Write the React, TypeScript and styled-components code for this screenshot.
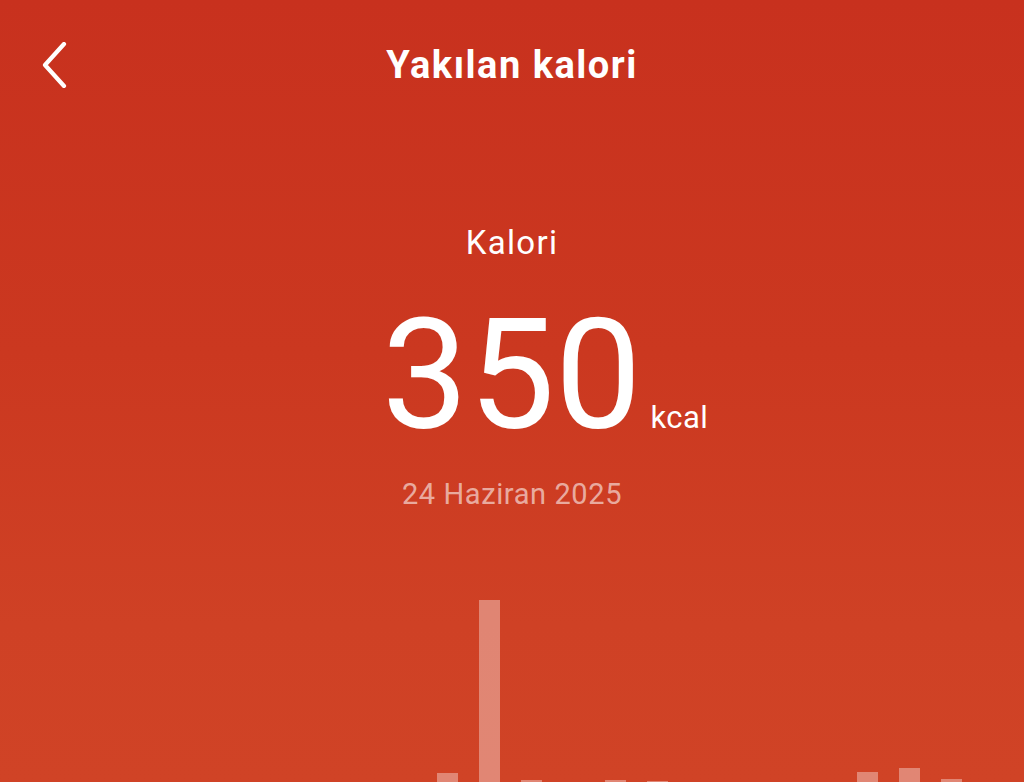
import React from "react";
import styled, { createGlobalStyle } from "styled-components";

const Global = createGlobalStyle`
  html, body { margin: 0; padding: 0; }
  body { font-family: Roboto, "Noto Sans", sans-serif; background: #c8311e; }
  #root { height: 782px; }
`;

const Screen = styled.div`
  width: 1024px;
  height: 782px;
  overflow: hidden;
  display: flex;
  flex-direction: column;
  background: linear-gradient(180deg, #c8311e 0%, #cb3820 45%, #cf4125 80%, #d04326 100%);
  color: #fff;
`;

const TopBar = styled.header`
  height: 130px;
  display: grid;
  grid-template-columns: 112px 1fr 112px;
  align-items: start;
  padding-top: 42px;
  box-sizing: border-box;
`;

const BackButton = styled.button`
  background: none;
  border: none;
  padding: 0 0 0 40px;
  width: 112px;
  height: 46px;
  display: flex;
  align-items: center;
  cursor: pointer;
`;

const Title = styled.h1`
  margin: 0;
  text-align: center;
  font-size: 38px;
  font-weight: 700;
  line-height: 46px;
  letter-spacing: 1.5px;
`;

const Summary = styled.section`
  display: flex;
  flex-direction: column;
  align-items: center;
  padding-top: 94px;
`;

const Label = styled.div`
  font-size: 33px;
  line-height: 38px;
  font-weight: 400;
  letter-spacing: 1.3px;
`;

const ValueRow = styled.div`
  display: flex;
  align-items: baseline;
  margin-top: 50px;
  padding-left: 66px;
  height: 128px;
`;

const Value = styled.span`
  font-size: 154px;
  line-height: 128px;
  font-weight: 400;
`;

const Unit = styled.span`
  font-size: 31px;
  margin-left: 9px;
  letter-spacing: 0.4px;
`;

const DateText = styled.div`
  margin-top: 37px;
  font-size: 29px;
  line-height: 34px;
  letter-spacing: 0.6px;
  color: rgba(255, 255, 255, 0.58);
`;

const Chart = styled.div`
  flex: 1;
  display: flex;
  align-items: flex-end;
  gap: 21px;
  padding-left: 17px;
`;

const Bar = styled.div`
  width: 21px;
  flex: none;
  background: rgba(255, 255, 255, 0.36);
`;

const hours = [0, 0, 0, 0, 0, 0, 0, 0, 0, 0, 9, 182, 2, 0, 2, 1, 0, 0, 0, 0, 10, 14, 3, 0];

export default function App() {
  return (
    <>
      <Global />
      <Screen>
        <TopBar>
          <BackButton aria-label="Geri">
            <svg width="30" height="46" viewBox="0 0 30 46" fill="none">
              <path d="M24 2 L5 23 L24 44" stroke="#fff" strokeWidth="4.2" strokeLinecap="round" strokeLinejoin="round" />
            </svg>
          </BackButton>
          <Title>Yakılan kalori</Title>
          <div />
        </TopBar>
        <Summary>
          <Label>Kalori</Label>
          <ValueRow>
            <Value>350</Value>
            <Unit>kcal</Unit>
          </ValueRow>
          <DateText>24 Haziran 2025</DateText>
        </Summary>
        <Chart>
          {hours.map((h, i) => (
            <Bar key={i} style={{ height: `${h}px` }} />
          ))}
        </Chart>
      </Screen>
    </>
  );
}
